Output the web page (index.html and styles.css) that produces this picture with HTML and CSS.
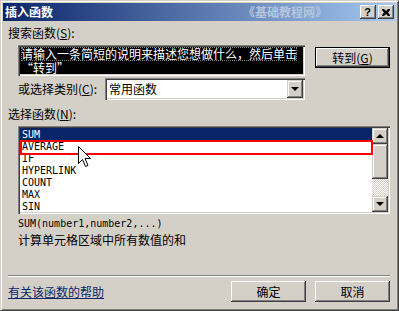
FILE: index.html
```html
<!DOCTYPE html>
<html lang="zh-CN">
<head>
<meta charset="utf-8">
<title>插入函数</title>
<link rel="stylesheet" href="styles.css">
</head>
<body>
<div class="window">
  <div class="titlebar">
    <span class="title">插入函数</span>
    <span class="watermark">《基础教程网》</span>
    <span class="tbtn help">?</span>
    <span class="tbtn close"><svg width="8" height="7" viewBox="0 0 8 7"><path d="M0 0h2l2 2 2-2h2v1L6 3.5 8 6v1H6L4 5 2 7H0V6l2-2.5L0 1z" fill="#000"/></svg></span>
  </div>
  <div class="content">
    <div class="label">搜索函数(<u>S</u>):</div>
    <div class="search-row">
      <div class="searchbox"><div class="focus">请输入一条简短的说明来描述您想做什么，然后单击</div><div>“转到”</div></div>
      <div class="btn default">转到(<u>G</u>)</div>
    </div>
    <div class="cat-row">
      <span class="cat-label">或选择类别(<u>C</u>):</span>
      <div class="combo">
        <span class="combo-text">常用函数</span>
        <span class="combo-btn"><span class="arrow-down"></span></span>
      </div>
    </div>
    <div class="label label-fn">选择函数(<u>N</u>):</div>
    <div class="listbox">
      <div class="items">
        <div class="item sel">SUM</div>
        <div class="item">AVERAGE</div>
        <div class="item">IF</div>
        <div class="item">HYPERLINK</div>
        <div class="item">COUNT</div>
        <div class="item">MAX</div>
        <div class="item">SIN</div>
      </div>
      <div class="scrollbar">
        <div class="sb-btn"><span class="arrow-up"></span></div>
        <div class="thumb"></div>
        <div class="track"></div>
        <div class="sb-btn"><span class="arrow-down"></span></div>
      </div>
      <div class="mark"></div>
    </div>
    <div class="sig">SUM(number1,number2,...)</div>
    <div class="desc">计算单元格区域中所有数值的和</div>
    <div class="sep"></div>
    <div class="footer">
      <a class="link" href="#">有关该函数的帮助</a>
      <div class="btn">确定</div>
      <div class="btn">取消</div>
    </div>
  </div>
  <svg class="cursor" width="13" height="21" viewBox="0 0 13 21"><path d="M0.5 0.5V17.5L4.5 13.5L7.5 20.5L10 19.5L7 12.5H12.5Z" fill="#fff" stroke="#000" stroke-width="1"/></svg>
</div>
</body>
</html>
```
FILE: styles.css
```css
* { box-sizing: border-box; }
body {
  margin: 0;
  background: #d4d0c8;
  font-family: "Noto Sans CJK SC", "Liberation Sans", sans-serif;
  font-size: 12px;
  color: #000;
}
.window {
  position: relative;
  width: 399px;
  height: 311px;
  background: #d4d0c8;
  border: 1px solid;
  border-color: #d4d0c8 #404040 #404040 #d4d0c8;
  box-shadow: inset 1px 1px #fff, inset -1px -1px #808080;
  padding: 2px;
  display: flex;
  flex-direction: column;
}
.titlebar {
  height: 18px;
  display: flex;
  align-items: center;
  padding: 0 2px;
  background: linear-gradient(to right, #0a246a, #a6caf0);
}
.title {
  color: #fff;
  font-weight: bold;
  line-height: 14px;
}
.watermark {
  margin-left: auto;
  margin-right: 33px;
  color: #b6c6de;
  font-weight: bold;
  line-height: 14px;
}
.tbtn {
  width: 16px;
  height: 14px;
  background: #d4d0c8;
  box-shadow: inset -1px -1px #404040, inset 1px 1px #fff, inset -2px -2px #808080;
  display: flex;
  align-items: center;
  justify-content: center;
}
.tbtn + .tbtn { margin-left: 2px; }
.help {
  font-family: "Liberation Sans", sans-serif;
  font-weight: bold;
  font-size: 11px;
  line-height: 12px;
  padding-right: 1px;
}
.content {
  flex: 1;
  display: flex;
  flex-direction: column;
  padding: 5px 6px 6px 5px;
}
.label {
  height: 14px;
  line-height: 14px;
}
.search-row {
  display: flex;
  align-items: flex-start;
  margin: 5px 0 0 10px;
}
.searchbox {
  width: 287px;
  height: 31px;
  background: #000;
  color: #fff;
  padding: 2px 3px 0;
  line-height: 14px;
  white-space: nowrap;
  box-shadow: inset 1px 1px #808080, inset 2px 2px #404040, inset -1px -1px #fff, inset -2px -2px #d4d0c8;
}
.searchbox div {
  height: 14px;
  line-height: 14px;
}
.focus {
  width: max-content;
  outline: 1px dotted #808080;
  outline-offset: -1px;
}
.btn {
  width: 75px;
  height: 21px;
  display: flex;
  align-items: center;
  justify-content: center;
  line-height: 14px;
  background: #d4d0c8;
  box-shadow: inset -1px -1px #404040, inset 1px 1px #fff, inset -2px -2px #808080;
}
.btn.default {
  margin: 2px 0 0 10px;
  border: 1px solid #000;
}
.cat-row {
  display: flex;
  align-items: center;
  margin: 2px 0 0 10px;
}
.cat-label {
  width: 87px;
  line-height: 14px;
}
.combo {
  width: 200px;
  height: 22px;
  background: #fff;
  padding: 2px;
  display: flex;
  box-shadow: inset 1px 1px #808080, inset 2px 2px #404040, inset -1px -1px #fff, inset -2px -2px #d4d0c8;
}
.combo-text {
  flex: 1;
  padding-left: 2px;
  line-height: 18px;
}
.combo-btn {
  width: 16px;
  height: 18px;
  background: #d4d0c8;
  display: flex;
  align-items: center;
  justify-content: center;
  box-shadow: inset -1px -1px #404040, inset 1px 1px #d4d0c8, inset -2px -2px #808080, inset 2px 2px #fff;
}
.arrow-down, .arrow-up {
  width: 0;
  height: 0;
  border-left: 4px solid transparent;
  border-right: 4px solid transparent;
}
.arrow-down { border-top: 4px solid #000; }
.arrow-up { border-bottom: 4px solid #000; }
.label-fn { margin-top: 7px; }
.listbox {
  position: relative;
  display: flex;
  height: 88px;
  margin: 5px 0 0 10px;
  padding: 2px;
  background: #fff;
  box-shadow: inset 1px 1px #808080, inset 2px 2px #404040, inset -1px -1px #fff, inset -2px -2px #d4d0c8;
}
.items {
  flex: 1;
  background: #fff;
}
.item {
  height: 12px;
  line-height: 13px;
  padding-left: 2px;
  font-family: "DejaVu Sans Mono", "Liberation Mono", monospace;
  font-size: 10px;
}
.item.sel {
  background: #0a246a;
  color: #fff;
}
.scrollbar {
  width: 16px;
  display: flex;
  flex-direction: column;
}
.sb-btn, .thumb {
  background: #d4d0c8;
  box-shadow: inset -1px -1px #404040, inset 1px 1px #d4d0c8, inset -2px -2px #808080, inset 2px 2px #fff;
}
.sb-btn {
  height: 16px;
  display: flex;
  align-items: center;
  justify-content: center;
}
.thumb { height: 35px; }
.track {
  flex: 1;
  background: repeating-conic-gradient(#fff 0 25%, #d4d0c8 0 50%) 0 0 / 2px 2px;
}
.mark {
  position: absolute;
  left: 2px;
  top: 14px;
  width: 353px;
  height: 15px;
  border: 2px solid #f00;
}
.sig {
  margin: 4px 0 0 10px;
  font-family: "DejaVu Sans Mono", "Liberation Mono", monospace;
  font-size: 10px;
  line-height: 12px;
}
.desc {
  margin: 2px 0 0 10px;
  line-height: 16px;
}
.sep {
  margin-top: auto;
  height: 2px;
  border-top: 1px solid #808080;
  border-bottom: 1px solid #fff;
}
.footer {
  display: flex;
  align-items: center;
  margin-top: 4px;
  height: 21px;
}
.link {
  flex: 1;
  color: #0a246a;
  line-height: 14px;
}
.footer .btn + .btn { margin-left: 9px; }
.cursor {
  position: absolute;
  left: 77px;
  top: 145px;
}
```
